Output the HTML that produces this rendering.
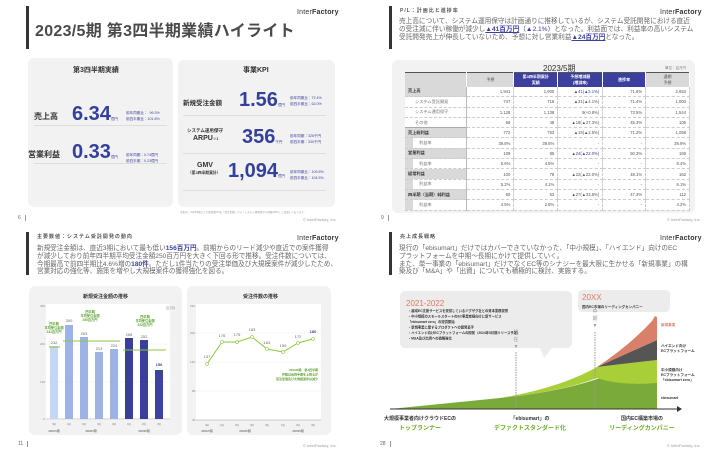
<!DOCTYPE html>
<html><head><meta charset="utf-8"><style>
*{margin:0;padding:0;box-sizing:border-box}
body{width:720px;height:450px;background:#fff;position:relative;overflow:hidden;font-family:"Liberation Sans","Noto Sans CJK JP",sans-serif;color:#444}
.a{position:absolute;white-space:nowrap}
.bar{position:absolute;width:3px;background:#333}
.logo{position:absolute;font-size:7px;color:#333;letter-spacing:.2px}
.logo b{font-weight:900}
.pn{position:absolute;font-size:5px;color:#666;border-right:1px solid #999;padding-right:4px}
.cp{position:absolute;font-size:4px;color:#999}
.panel{position:absolute;background:#f2f2f2;border-radius:6px}
.blue{color:#3b3f9e}
.big{font-weight:bold;color:#34409a;font-family:"Liberation Sans",sans-serif}
.sm{font-size:3.6px;color:#3b3f9e;line-height:6px}
.ln{position:absolute;height:1px;background:#ddd}
.para{position:absolute;font-size:6.6px;line-height:8.2px;color:#666;white-space:nowrap}
table{border-collapse:collapse;font-size:4.2px;color:#555}
td{height:10.3px;border-bottom:1px dashed #ccc;border-right:1px dashed #ccc;text-align:right;padding-right:3px;background:#fff}
td.l{text-align:left;padding-left:3px;background:#d9d9d9;font-weight:bold;border-right:1px solid #bbb;color:#333}
th{height:14px;font-size:4px;font-weight:bold;color:#fff;background:#3c3f9e;border-right:1px solid #fff}
th.g{background:#d9d9d9;color:#555;font-weight:normal}
</style></head><body>

<!-- Slide 1 -->
<div class="bar" style="left:26px;top:6px;height:43px"></div>
<div class="a" style="left:35px;top:17px;font-size:16px;font-weight:bold;color:#4a4a4a;letter-spacing:.3px">2023/5期 第3四半期業績ハイライト</div>
<div class="logo" style="left:297px;top:9px">Inter<b>Factory</b></div>
<div class="panel" style="left:28px;top:58px;width:145px;height:149px"></div>
<div class="panel" style="left:178px;top:60px;width:157px;height:147px"></div>
<div class="a" style="left:73px;top:65px;font-size:7px;font-weight:bold;color:#333">第3四半期実績</div>
<div class="a" style="left:243px;top:65px;font-size:7px;font-weight:bold;color:#333">事業KPI</div>
<div class="a" style="left:34px;top:111px;font-size:8px;font-weight:bold;color:#333">売上高</div>
<div class="a big" style="left:72px;top:103px;font-size:20px">6.34<span style="font-size:3.5px;font-weight:normal">億円</span></div>
<div class="a sm" style="left:126px;top:110px">前年同期比：&nbsp; 99.3%<br>前四半期比：101.8%</div>
<div class="ln" style="left:34px;top:125px;width:133px"></div>
<div class="a" style="left:28px;top:149px;font-size:8px;font-weight:bold;color:#333">営業利益</div>
<div class="a big" style="left:72px;top:141px;font-size:20px">0.33<span style="font-size:3.5px;font-weight:normal">億円</span></div>
<div class="a sm" style="left:126px;top:152px">前年同期：0.74億円<br>前四半期：0.23億円</div>
<div class="ln" style="left:34px;top:163px;width:133px"></div>

<div class="a" style="left:183px;top:97px;font-size:6.5px;font-weight:bold;color:#333">新規受注金額</div>
<div class="a big" style="left:239px;top:89px;font-size:20px">1.56<span style="font-size:3.5px;font-weight:normal">億円</span></div>
<div class="a sm" style="left:290px;top:95px">前年同期比：72.4%<br>前四半期比：62.0%</div>
<div class="ln" style="left:183px;top:115px;width:143px"></div>
<div class="a" style="left:187px;top:128px;font-size:4.5px;font-weight:bold;color:#333">システム運用保守</div>
<div class="a" style="left:193px;top:135px;font-size:7px;font-weight:bold;color:#333">ARPU<span style="font-size:3.5px">※1</span></div>
<div class="a big" style="left:242px;top:126px;font-size:20px">356<span style="font-size:3.5px;font-weight:normal">千円</span></div>
<div class="a sm" style="left:290px;top:133px">前年同期：326千円<br>前四半期：330千円</div>
<div class="ln" style="left:183px;top:153px;width:143px"></div>
<div class="a" style="left:197px;top:162px;font-size:7px;font-weight:bold;color:#333">GMV</div>
<div class="a" style="left:188px;top:171px;font-size:3.8px;font-weight:bold;color:#333">（第3四半期累計）</div>
<div class="a big" style="left:228px;top:160px;font-size:20px">1,094<span style="font-size:3.5px;font-weight:normal">億円</span></div>
<div class="a sm" style="left:290px;top:169px">前年同期比：109.6%<br>前四半期比：104.5%</div>
<div class="ln" style="left:183px;top:190px;width:143px"></div>
<div class="a" style="left:180px;top:210px;font-size:2.5px;color:#999">注釈(1)：2023/5期より主要事業KPIを「受注金額」から「システム運用保守の月額ARPU」に変更しております。</div>
<div class="pn" style="left:18px;top:215px">6</div>
<div class="cp" style="left:303px;top:217px">© InterFactory, Inc.</div>

<!-- Slide 2 -->
<div class="bar" style="left:389px;top:6px;height:43px"></div>
<div class="a" style="left:400px;top:7px;font-size:5px;font-weight:bold;color:#555;letter-spacing:1px">P/L：計画比と進捗率</div>
<div class="logo" style="left:660px;top:9px">Inter<b>Factory</b></div>
<div class="para" style="left:399px;top:18px;font-size:6.65px">売上高について、システム運用保守は計画通りに推移しているが、システム受託開発における直近<br>の受注減に伴い稼働が減少し<b class="blue" style="text-decoration:underline">▲41百万円</b><span class="blue">（▲2.1%）</span>となった。利益面では、利益率の高いシステム<br>受託開発売上が伸長していないため、予想に対し営業利益<b class="blue" style="text-decoration:underline">▲24百万円</b>となった。</div>
<div class="panel" style="left:392px;top:60px;width:303px;height:153px"></div>
<div class="a" style="left:543px;top:63px;font-size:8px;color:#333">2023/5期</div>
<div class="a" style="left:665px;top:66px;font-size:3.5px;color:#777">単位：百万円</div>
<table class="a" style="left:405px;top:72px;width:285px;border-top:1px solid #555">
<tr><th class="g" style="width:62px"></th><th class="g" style="width:47px">予想</th><th style="width:44px">第3四半期累計<br>実績</th><th style="width:45px">予想増減額<br>(増減率)</th><th style="width:43px">進捗率</th><th class="g" style="width:44px">通期<br>予想</th></tr>
<tr><td class="l">売上高</td><td>1,941</td><td>1,900</td><td class="blue">▲41(▲2.1%)</td><td>71.6%</td><td>2,653</td></tr>
<tr><td class="l" style="padding-left:10px;font-weight:normal;background:#fff;color:#777">システム受託開発</td><td>747</td><td>716</td><td>▲31(▲4.1%)</td><td>71.4%</td><td>1,003</td></tr>
<tr><td class="l" style="padding-left:10px;font-weight:normal;background:#fff;color:#777">システム運用保守</td><td>1,128</td><td>1,138</td><td>9(+0.8%)</td><td>73.5%</td><td>1,544</td></tr>
<tr><td class="l" style="padding-left:10px;font-weight:normal;background:#fff;color:#777">その他</td><td>66</td><td>48</td><td>▲18(▲27.3%)</td><td>45.3%</td><td>106</td></tr>
<tr><td class="l" style="border-top:1px solid #aaa">売上総利益</td><td>772</td><td>753</td><td>▲19(▲2.5%)</td><td>71.2%</td><td>1,058</td></tr>
<tr><td class="l" style="padding-left:14px;font-weight:normal;background:linear-gradient(90deg,#d9d9d9 8px,#fff 8px);color:#777">利益率</td><td>39.8%</td><td>39.6%</td><td>-</td><td>-</td><td>39.9%</td></tr>
<tr><td class="l">営業利益</td><td>109</td><td>85</td><td class="blue">▲24(▲22.0%)</td><td>50.3%</td><td>169</td></tr>
<tr><td class="l" style="padding-left:14px;font-weight:normal;background:linear-gradient(90deg,#d9d9d9 8px,#fff 8px);color:#777">利益率</td><td>5.6%</td><td>4.5%</td><td>-</td><td>-</td><td>6.4%</td></tr>
<tr><td class="l">経常利益</td><td>100</td><td>78</td><td>▲22(▲22.0%)</td><td>48.1%</td><td>162</td></tr>
<tr><td class="l" style="padding-left:14px;font-weight:normal;background:linear-gradient(90deg,#d9d9d9 8px,#fff 8px);color:#777">利益率</td><td>5.2%</td><td>4.1%</td><td>-</td><td>-</td><td>6.1%</td></tr>
<tr><td class="l">四半期（当期）純利益</td><td>80</td><td>53</td><td>▲27(▲33.8%)</td><td>47.3%</td><td>112</td></tr>
<tr><td class="l" style="padding-left:14px;font-weight:normal;background:linear-gradient(90deg,#d9d9d9 8px,#fff 8px);color:#777">利益率</td><td>4.5%</td><td>2.8%</td><td>-</td><td>-</td><td>4.2%</td></tr>
</table>
<div class="pn" style="left:381px;top:215px">9</div>
<div class="cp" style="left:667px;top:217px">© InterFactory, Inc.</div>

<!-- Slide 3 -->
<div class="bar" style="left:26px;top:232px;height:43px"></div>
<div class="a" style="left:37px;top:233px;font-size:5px;font-weight:bold;color:#555;letter-spacing:1px">主要数値：システム受託開発の動向</div>
<div class="logo" style="left:297px;top:235px">Inter<b>Factory</b></div>
<div class="para" style="left:37px;top:245px;font-size:6.6px;line-height:7.8px">新規受注金額は、直近3期において最も低い<b class="blue">156百万円</b>。前期からのリード減少や直近での案件獲得<br>が減少しており前年四半期平均受注金額250百万円を大きく下回る形で推移。受注件数については、<br>今期最高で前四半期比4.6%増の<b class="blue">180件</b>。ただし1件当たりの受注単価及び大規模案件が減少したため、<br>営業対応の強化等、施策を増やし大規模案件の獲得強化を図る。</div>
<div class="panel" style="left:29px;top:286px;width:153px;height:149px"></div>
<div class="panel" style="left:187px;top:286px;width:144px;height:149px"></div>
<div class="a" style="left:83px;top:293px;font-size:5px;font-weight:bold;color:#333">新規受注金額の推移</div>
<div class="a" style="left:243px;top:293px;font-size:5px;font-weight:bold;color:#333">受注件数の推移</div>
<svg class="a" style="left:29px;top:286px" width="153" height="149" viewBox="29 286 153 149">
<rect x="46" y="304" width="124" height="116" fill="#fff"/>
<g stroke="#eee" stroke-width=".5"><line x1="46" y1="344" x2="170" y2="344"/><line x1="46" y1="382" x2="170" y2="382"/></g>
<line x1="46" y1="419" x2="170" y2="419" stroke="#999" stroke-width=".5"/>
<g font-size="3" fill="#888"><text x="40" y="307">360</text><text x="40" y="345">240</text><text x="40" y="383">120</text><text x="43" y="420">0</text><text x="166" y="309">百万円</text></g>
<rect x="50" y="346" width="8" height="73" fill="#c6d6f4"/>
<rect x="65" y="325" width="8" height="94" fill="#9db3e6"/>
<rect x="80" y="337" width="8" height="82" fill="#9db3e6"/>
<rect x="95" y="352" width="8" height="67" fill="#9db3e6"/>
<rect x="110" y="349" width="8" height="70" fill="#9db3e6"/>
<rect x="125" y="338" width="8" height="81" fill="#3a3f9a"/>
<rect x="140" y="340" width="8" height="79" fill="#3a3f9a"/>
<rect x="155" y="370" width="8" height="49" fill="#3e43a0"/>
<g stroke="#8cc63f" stroke-width="1"><line x1="49" y1="347" x2="60" y2="347"/><line x1="63" y1="341" x2="120" y2="341"/><line x1="123" y1="350" x2="166" y2="350"/></g>
<g font-size="4" fill="#666" text-anchor="middle"><text x="54" y="344">232</text><text x="69" y="322">300</text><text x="84" y="335">263</text><text x="99" y="350">213</text><text x="114" y="347">224</text><text x="129" y="336">258</text><text x="144" y="338">252</text><text x="159" y="366" fill="#3b3f9e" font-weight="bold">156</text></g>
<g font-size="3.2" fill="#5aa02c" text-anchor="middle" font-weight="bold"><text x="54" y="325">四半期</text><text x="54" y="329">平均受注金額</text><text x="54" y="333">231百万円</text><text x="90" y="313">四半期</text><text x="90" y="317">平均受注金額</text><text x="90" y="321">250百万円</text><text x="145" y="318">四半期</text><text x="145" y="322">平均受注金額</text><text x="145" y="326">222百万円</text></g>
<g font-size="2.8" fill="#777" text-anchor="middle"><text x="54" y="425">4Q</text><text x="69" y="425">1Q</text><text x="84" y="425">2Q</text><text x="99" y="425">3Q</text><text x="114" y="425">4Q</text><text x="129" y="425">1Q</text><text x="144" y="425">2Q</text><text x="159" y="425">3Q</text>
<text x="54" y="432" font-weight="bold">2021/5期</text><text x="91" y="432" font-weight="bold">2022/5期</text><text x="144" y="432" font-weight="bold">2023/5期</text></g>
</svg>
<svg class="a" style="left:187px;top:286px" width="144" height="149" viewBox="187 286 144 149">
<rect x="196" y="304" width="125" height="116" fill="#fff"/>
<g stroke="#eee" stroke-width=".5"><line x1="196" y1="333" x2="321" y2="333"/><line x1="196" y1="362" x2="321" y2="362"/><line x1="196" y1="391" x2="321" y2="391"/></g>
<line x1="196" y1="420" x2="321" y2="420" stroke="#999" stroke-width=".5"/>
<g font-size="3" fill="#888"><text x="190" y="307">240</text><text x="190" y="334">200</text><text x="190" y="363">140</text><text x="192" y="392">80</text><text x="192" y="421">40</text></g>
<polyline points="207,364 222,342 237,342 252,337 267,349 283,352 298,343 313,339" fill="none" stroke="#8cc63f" stroke-width="1"/>
<g fill="#fff" stroke="#8cc63f" stroke-width=".6"><circle cx="207" cy="364" r="1.4"/><circle cx="222" cy="342" r="1.4"/><circle cx="237" cy="342" r="1.4"/><circle cx="252" cy="337" r="1.4"/><circle cx="267" cy="349" r="1.4"/><circle cx="283" cy="352" r="1.4"/><circle cx="298" cy="343" r="1.4"/><circle cx="313" cy="339" r="1.4"/></g>
<g font-size="4" fill="#666" text-anchor="middle"><text x="207" y="358">137</text><text x="222" y="337">176</text><text x="237" y="336">175</text><text x="252" y="331">183</text><text x="267" y="344">163</text><text x="283" y="347">159</text><text x="298" y="338">172</text><text x="313" y="333" fill="#3b3f9e" font-weight="bold">180</text></g>
<g font-size="3" fill="#5aa02c" text-anchor="end" font-weight="bold"><text x="318" y="371">2023/5期　第3四半期</text><text x="318" y="375.5">件数は前四半期を上回るが</text><text x="318" y="380">受注単価及び大規模案件は減少</text></g>
<g font-size="2.8" fill="#777" text-anchor="middle"><text x="207" y="426">4Q</text><text x="222" y="426">1Q</text><text x="237" y="426">2Q</text><text x="252" y="426">3Q</text><text x="267" y="426">4Q</text><text x="283" y="426">1Q</text><text x="298" y="426">2Q</text><text x="313" y="426">3Q</text>
<text x="207" y="432" font-weight="bold">2021/5期</text><text x="245" y="432" font-weight="bold">2022/5期</text><text x="298" y="432" font-weight="bold">2023/5期</text></g>
</svg>
<div class="pn" style="left:18px;top:441px">11</div>
<div class="cp" style="left:303px;top:443px">© InterFactory, Inc.</div>

<!-- Slide 4 -->
<div class="bar" style="left:389px;top:232px;height:43px"></div>
<div class="a" style="left:400px;top:233px;font-size:5px;font-weight:bold;color:#555;letter-spacing:1px">売上成長戦略</div>
<div class="logo" style="left:660px;top:235px">Inter<b>Factory</b></div>
<div class="para" style="left:399px;top:245px;font-size:6.6px;line-height:7.8px">現行の「ebisumart」だけではカバーできていなかった、「中小規模」、「ハイエンド」向けのEC<br>プラットフォームを中期～長期にかけて提供していく。<br>また、単一事業の「ebisumart」だけでなくEC等のシナジーを最大限に生かせる「新規事業」の構<br>築及び「M&amp;A」や「出資」についても積極的に検討、実施する。</div>
<svg class="a" style="left:360px;top:282px" width="360" height="160" viewBox="360 282 360 160">
<path d="M406,291 H566 Q572,291 572,297 V342 Q572,348 566,348 H552 L544,358 L540,348 H406 Q400,348 400,342 V297 Q400,291 406,291Z" fill="#ececec"/>
<path d="M583,290 H665 Q670,290 670,295 V307 Q670,312 665,312 H583 Q578,312 578,307 V295 Q578,290 583,290Z" fill="#ececec"/>
<path d="M390,409 L500,398 Q560,392 600,378 L657,383 L657,409Z" fill="#7aab3a"/>
<path d="M390,409 L500,398 Q560,388 597,367 Q630,363 657,360 L657,383 Q620,386 597,378 Q560,392 500,398Z" fill="#a8cf38"/>
<path d="M597,367 Q630,352 657,340 L657,360 Q630,363 597,367Z" fill="#555"/>
<path d="M597,367 Q630,345 652,321 L655,316 L657,317 L657,340 Q630,352 597,367Z" fill="#d9806a"/>
<line x1="390" y1="409" x2="677" y2="409" stroke="#333" stroke-width="1"/>
<path d="M677,406 L682,409 L677,412Z" fill="#333"/>
<line x1="516" y1="352" x2="516" y2="409" stroke="#999" stroke-width="1" stroke-dasharray="1.5,1"/>
<line x1="595" y1="332" x2="595" y2="409" stroke="#999" stroke-width="1" stroke-dasharray="1.5,1"/>
<g font-size="5" fill="#999" text-anchor="middle"><text x="516" y="334">現</text><text x="516" y="341">在</text><text x="516" y="348">▼</text><text x="595" y="313">中</text><text x="595" y="320">期</text><text x="595" y="327">▼</text></g>
<text x="406" y="306" font-size="8" fill="#e07a5f">2021-2022</text>
<g font-size="3.3" fill="#333" font-weight="bold"><text x="408" y="312">・越境EC支援サービスを提供しているジグザグ社との資本業務提携</text><text x="408" y="317.5">・中小規模のスモールスタートのEC事業者様向けに新サービス</text><text x="408" y="323">「ebisumart zero」の提供開始</text><text x="408" y="328.5">・新規事業に関するプロダクトへの開発着手</text><text x="408" y="334">・ハイエンド向けECプラットフォームの開発（2024年5月期リリース予定）</text><text x="408" y="339.5">・M&amp;A及び出資への戦略強化</text></g>
<text x="582" y="300" font-size="8" fill="#e07a5f">20XX</text>
<text x="582" y="308" font-size="3.5" fill="#333" font-weight="bold">国内EC市場のリーディングカンパニー</text>
<g font-size="3.6" fill="#333" font-weight="bold"><text x="661" y="326" fill="#d9806a">新規事業</text><text x="661" y="347">ハイエンド向け</text><text x="661" y="352">ECプラットフォーム</text><text x="661" y="371">中小規模向け</text><text x="661" y="376">ECプラットフォーム</text><text x="661" y="381">「ebisumart zero」</text><text x="661" y="399">ebisumart</text></g>
<g font-size="5" font-weight="bold" text-anchor="middle"><text x="420" y="420" fill="#333">大規模事業者向けクラウドECの</text><text x="420" y="430" fill="#6ab023" font-size="6">トップランナー</text><text x="530" y="420" fill="#333">「ebisumart」の</text><text x="530" y="430" fill="#6ab023" font-size="6">デファクトスタンダード化</text><text x="642" y="420" fill="#333">国内EC構築市場の</text><text x="642" y="430" fill="#6ab023" font-size="6">リーディングカンパニー</text></g>
</svg>
<div class="pn" style="left:380px;top:441px">28</div>
<div class="cp" style="left:667px;top:443px">© InterFactory, Inc.</div>
</body></html>
